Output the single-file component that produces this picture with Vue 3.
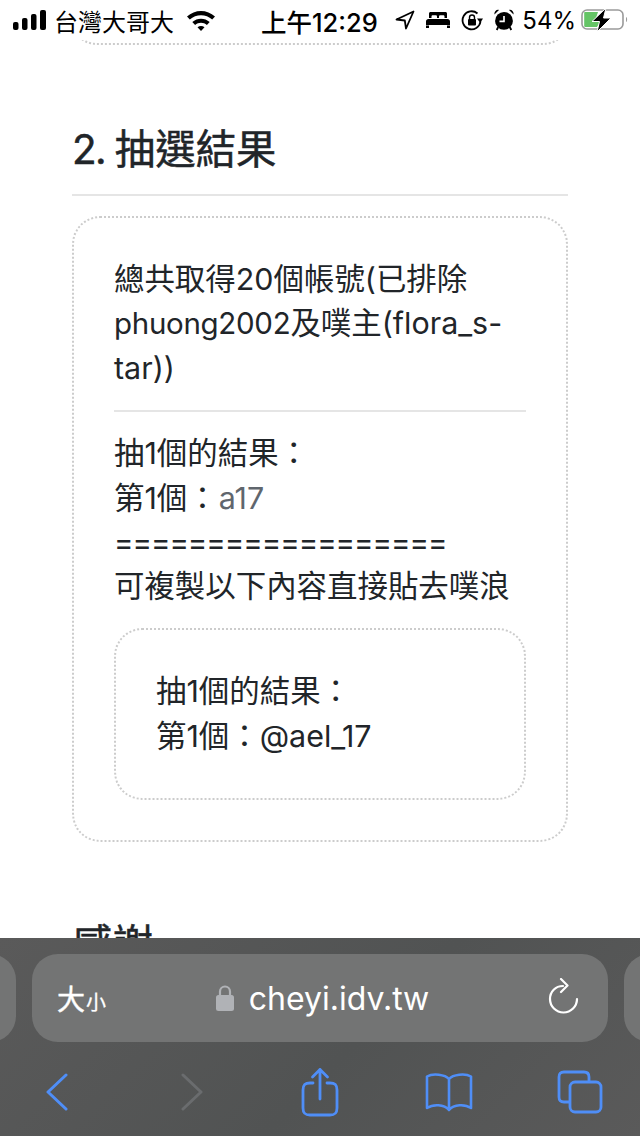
<template>
  <div class="screen">
    <header class="status">
      <div class="status-left">
        <svg class="signal" width="34" height="20" viewBox="0 0 34 20">
          <rect x="0" y="12" width="5.500" height="8" rx="2" />
          <rect x="9" y="8" width="5.500" height="12" rx="2" />
          <rect x="18" y="4" width="5.500" height="16" rx="2" />
          <rect x="27" y="0" width="6" height="20" rx="2" />
        </svg>
        <span class="carrier">台灣大哥大</span>
        <svg class="wifi" width="30" height="22" viewBox="0 0 30 22">
          <path d="M1 7.500C8.800 0 21.200 0 29 7.500L26.200 10.500C20 4.800 10 4.800 3.800 10.500Z" />
          <path d="M6.300 13C11.200 8.500 18.800 8.500 23.700 13L20.900 16C17.600 13 12.400 13 9.100 16Z" />
          <path d="M11.500 18.200C13.500 16.500 16.500 16.500 18.500 18.200L15 22Z" />
        </svg>
      </div>
      <span class="time">上午12:29</span>
      <div class="status-right">
        <svg width="20" height="20" viewBox="0 0 20 20" class="ic-loc">
          <path d="M18.500 1.500 1.500 9.500 9.800 10.500 11 18.500Z" />
        </svg>
        <svg width="24" height="16" viewBox="0 0 24 16" class="ic-bed">
          <path d="M3 1.500C3 .7 3.700 0 4.500 0H19.500C20.300 0 21 .7 21 1.500V6H18.500V4.500C18.500 3.700 18 3.200 17 3.200H14.500C13.500 3.200 13 3.700 13 4.500V6H11V4.500C11 3.700 10.500 3.200 9.500 3.200H7C6 3.200 5.500 3.700 5.500 4.500V6H3Z" />
          <path d="M2.500 7H21.500C23 7 24 8 24 9.500V13H0V9.500C0 8 1 7 2.500 7ZM0 13.500H3V16H0ZM21 13.500H24V16H21Z" />
        </svg>
        <svg width="22" height="22" viewBox="0 0 22 22">
          <path d="M19.500 12.500A9 9 0 1 1 16.500 4.500" fill="none" stroke="#000" stroke-width="1.800" />
          <path d="M16 9.500H22L19.200 14Z" />
          <rect x="7" y="10" width="8" height="6.500" rx="1" />
          <path d="M8.500 10V8.500a2.500 2.500 0 0 1 5 0V10" fill="none" stroke="#000" stroke-width="1.400" />
        </svg>
        <svg width="20" height="22" viewBox="0 0 22 24">
          <circle cx="11" cy="13" r="9.800" />
          <path d="M.5 6 5.500 1C3 0 0 2.500 .5 6ZM21.500 6 16.500 1C19 0 22 2.500 21.500 6Z" />
          <path d="M11 7.500V13.500H6" fill="none" stroke="#fff" stroke-width="1.800" />
          <path d="M4.500 20 3 23M17.500 20 19 23" stroke="#000" stroke-width="2" />
        </svg>
        <span class="percent">54%</span>
        <svg class="battery" width="47" height="24" viewBox="0 0 47 24">
          <rect x="1" y="2" width="41" height="19" rx="5" fill="none" stroke="#9a9a9a" stroke-width="1.600" />
          <path d="M4 4H17L14 13H19.500L16 19H4.500C3.700 19 3.200 18.500 3.200 17.700V5C3.200 4.500 3.500 4 4 4Z" fill="#65c466" />
          <path d="M45 9C46.500 9.500 46.500 13.500 45 14Z" fill="#9a9a9a" />
          <path d="M25 0 11 13.500H18.500L16 24 30 10H22.500Z" fill="#000" stroke="#fff" stroke-width="1" />
        </svg>
      </div>
    </header>

    <main class="page">
      <div class="top-card"></div>

      <h2 class="title"><span class="num">2. </span>抽選結果</h2>

      <section class="card">
        <p>總共取得20個帳號(已排除<br /><span class="tight">phuong2002</span>及噗主(flora_s-<br />tar))</p>
        <hr />
        <p>抽1個的結果：<br />第1個：<code>a17</code><br /><span class="eq">==================</span><br />可複製以下內容直接貼去噗浪</p>
        <div class="copy-box">
          <p>抽1個的結果：<br />第1個：@ael_17</p>
        </div>
      </section>

      <h3 class="thanks">感謝</h3>
    </main>

    <footer class="safari">
      <div class="address-row">
        <div class="side-tab"></div>
        <div class="address">
          <span class="aa"><span class="aa-big">大</span><span class="aa-small">小</span></span>
          <span class="url">
            <svg width="18" height="26" viewBox="0 0 18 26">
              <path d="M4 11V6.500a5 5 0 0 1 10 0V11" fill="none" stroke="#b0b2b6" stroke-width="2.200" />
              <rect x="0" y="10" width="18" height="16" rx="2.500" fill="#b0b2b6" />
            </svg>
            <span>cheyi.idv.tw</span>
          </span>
          <svg class="reload" width="31" height="36" viewBox="0 0 31 36" fill="none" stroke="#fff" stroke-width="2.200" stroke-linecap="round" stroke-linejoin="round">
            <path d="M15 8C7.500 8 2 13.500 2 21A13.500 13.500 0 1 0 29 21" />
            <path d="M13 1 19.500 7.500 13 14" />
          </svg>
        </div>
        <div class="side-tab"></div>
      </div>
      <nav class="toolbar">
        <svg width="22" height="38" viewBox="0 0 22 38" fill="none" stroke="#4f8ef7" stroke-width="3" stroke-linecap="round" stroke-linejoin="round">
          <path d="M20 2 2 19 20 36" />
        </svg>
        <svg width="22" height="38" viewBox="0 0 22 38" fill="none" stroke="#6a6c6e" stroke-width="3" stroke-linecap="round" stroke-linejoin="round">
          <path d="M2 2 20 19 2 36" />
        </svg>
        <svg width="40" height="50" viewBox="0 0 40 50" fill="none" stroke="#4f8ef7" stroke-width="2.800" stroke-linecap="round" stroke-linejoin="round">
          <path d="M13 16H10C5 16 3 18 3 23V41C3 46 5 48 10 48H30C35 48 37 46 37 41V23C37 18 35 16 30 16H27" />
          <path d="M20 32V2.500M12.500 10 20 2.500 27.500 10" />
        </svg>
        <svg width="48" height="40" viewBox="0 0 48 40" fill="none" stroke="#4f8ef7" stroke-width="2.600" stroke-linecap="round" stroke-linejoin="round">
          <path d="M24 7C20 2.500 8 1 2 4.500V36C8 32 19 32 24 38 29 32 40 32 46 36V4.500C40 1 28 2.500 24 7V38" />
        </svg>
        <svg width="46" height="44" viewBox="0 0 46 44" fill="none" stroke="#4f8ef7" stroke-width="2.800" stroke-linejoin="round">
          <path d="M13 32H7C3.500 32 2 30.500 2 27V7C2 3.500 3.500 2 7 2H27C30.500 2 32 3.500 32 7V12" />
          <rect x="13" y="12" width="31" height="30" rx="5" />
        </svg>
      </nav>
    </footer>
  </div>
</template>

<script setup>
</script>

<style>
html,
body {
  margin: 0;
  background: #fff;
}
</style>

<style scoped>
.screen {
  position: relative;
  width: 640px;
  height: 1136px;
  overflow: hidden;
  background: #fff;
  color: #212529;
  font-family: Inter, "Noto Sans CJK TC", sans-serif;
}

.status {
  position: absolute;
  top: 0;
  left: 0;
  right: 0;
  height: 40px;
  padding: 0 12px 0 13px;
  box-sizing: border-box;
  background: #fff;
  display: flex;
  align-items: center;
  color: #000;
  font-size: 24px;
  z-index: 2;
}

.status svg {
  flex: none;
  fill: #000;
}

.status-left,
.status-right {
  display: flex;
  align-items: center;
}

.status-left {
  flex: none;
  width: 248px;
  gap: 7px;
}

.wifi {
  margin-left: 5px;
}

.time {
  font-size: 25.500px;
  font-weight: 500;
}

.status-right {
  margin-left: auto;
  gap: 11px;
}

.status .ic-loc {
  fill: none;
  stroke: #000;
  stroke-width: 1.800;
  stroke-linejoin: round;
}

.percent {
  margin-left: -3px;
  margin-right: -6px;
}

.page {
  padding: 0 72px;
}

.top-card {
  height: 45px;
  box-sizing: border-box;
  border: 2px dotted #ccc;
  border-top: 0;
  border-radius: 0 0 24px 24px;
}

.title {
  margin: 81px 0 20px;
  padding-bottom: 20px;
  border-bottom: 2px solid #e5e5e5;
  font-size: 40.400px;
  line-height: 48px;
  font-weight: 400;
  -webkit-text-stroke: 0.500px #212529;
}

.num {
  letter-spacing: -1.600px;
}

.card {
  border: 2px dotted #ccc;
  border-radius: 28px;
  padding: 39px 40px 40px;
  font-size: 30.450px;
  line-height: 44.400px;
}

.card p {
  margin: 0;
}

.tight {
  font-size: 29.500px;
  letter-spacing: -0.300px;
}

.eq {
  font-size: 29.500px;
  letter-spacing: -1.050px;
}

.card hr {
  border: 0;
  border-top: 2px solid #e5e5e5;
  margin: 20px 0 19px;
}

code {
  font: inherit;
  color: #60666d;
  margin-left: 1px;
}

.copy-box {
  margin-top: 19px;
  border: 2px dotted #ccc;
  border-radius: 28px;
  padding: 39.500px 40px;
}

.thanks {
  margin: 79px 0 0;
  font-size: 40.400px;
  line-height: 48px;
  font-weight: 400;
  -webkit-text-stroke: 0.500px #212529;
}

.safari {
  position: absolute;
  left: 0;
  right: 0;
  bottom: 0;
  height: 198px;
  background: linear-gradient(135deg, #5a5a5a, #515353 55%, #5a5a5a);
  z-index: 2;
}

.address-row {
  display: flex;
  gap: 16px;
  margin: 16px -60px 0;
  height: 88px;
}

.address {
  flex: 1;
  display: flex;
  align-items: center;
  justify-content: center;
  position: relative;
  padding-left: 5px;
  background: #737474;
  border-radius: 26px;
  color: #fff;
}

.side-tab {
  width: 76px;
  background: #737474;
  border-radius: 26px;
}

.aa {
  position: absolute;
  left: 25px;
  display: flex;
  align-items: baseline;
}

.aa-big {
  font-size: 28px;
  -webkit-text-stroke: 0.400px #fff;
}

.aa-small {
  font-size: 20px;
  margin-left: 1px;
  -webkit-text-stroke: 0.300px #fff;
}

.url {
  display: flex;
  align-items: center;
  gap: 15px;
  font-size: 32px;
}

.reload {
  position: absolute;
  right: 29px;
  top: 24px;
}

.toolbar {
  display: grid;
  grid-template-columns: 135px 119px 125px 132px auto;
  align-items: center;
  height: 70px;
  margin-top: 15px;
  padding-left: 46px;
}
</style>
